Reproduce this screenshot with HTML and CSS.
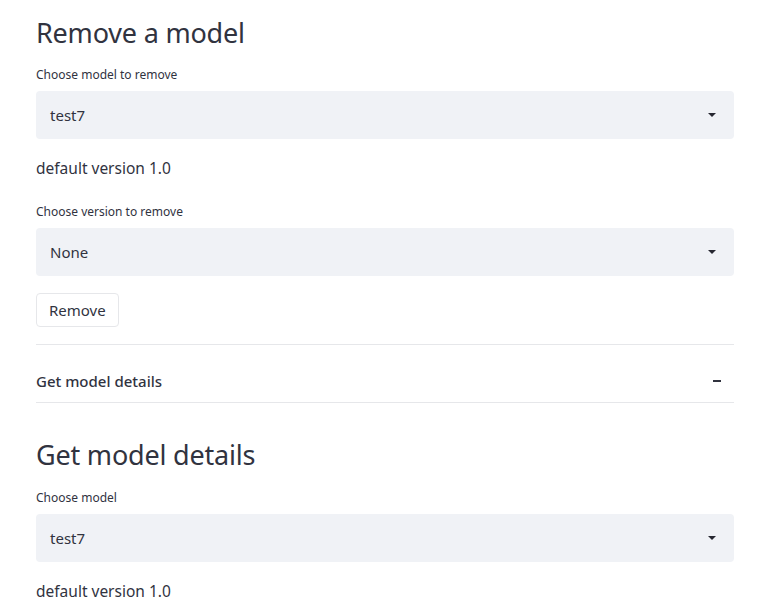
FILE: index.html
```html
<!DOCTYPE html>
<html lang="en">
<head>
    <meta charset="UTF-8">
    <meta name="viewport" content="width=device-width, initial-scale=1.0">
    <title>Models</title>
    <link rel="stylesheet" href="styles.css">
</head>
<body>
    <main class='page'>
        <h1 class='title first'>Remove a model</h1>

        <div class='field'>
            <label class='label'>Choose model to remove</label>
            <div class='select'>
                <span>test7</span>
                <svg class='caret' width="10" height="6" viewBox="0 0 10 6"><path d="M1 1h8L5 5z" fill="#262730"/></svg>
            </div>
        </div>

        <p class='text'>default version 1.0</p>

        <div class='field'>
            <label class='label'>Choose version to remove</label>
            <div class='select'>
                <span>None</span>
                <svg class='caret' width="10" height="6" viewBox="0 0 10 6"><path d="M1 1h8L5 5z" fill="#262730"/></svg>
            </div>
        </div>

        <button class='btn'>Remove</button>

        <section class='expander'>
            <div class='expander-head'>
                <span>Get model details</span>
                <span class='minus'></span>
            </div>
        </section>

        <h1 class='title second'>Get model details</h1>

        <div class='field'>
            <label class='label'>Choose model</label>
            <div class='select'>
                <span>test7</span>
                <svg class='caret' width="10" height="6" viewBox="0 0 10 6"><path d="M1 1h8L5 5z" fill="#262730"/></svg>
            </div>
        </div>

        <p class='text'>default version 1.0</p>
    </main>
</body>
</html>
```

FILE: styles.css
```css
body{
    margin: 0;
    background: #fff;
    color: #31333f;
    font-family: 'Noto Sans', 'Open Sans', sans-serif;
}
.page{
    width: 698px;
    padding: 0 36px;
}
.title{
    margin: 0;
    font-size: 27px;
    line-height: 40px;
    font-weight: 400;
    letter-spacing: -0.2px;
}
.first{
    margin-top: 13px;
}
.second{
    margin-top: 32px;
}
.field{
    margin-top: 14px;
}
.second + .field{
    margin-top: 15px;
}
.label{
    display: block;
    font-size: 12px;
    line-height: 16px;
    margin-bottom: 8px;
}
.select{
    height: 48px;
    background: #f0f2f6;
    border-radius: 4px;
    display: flex;
    align-items: center;
    justify-content: space-between;
    padding: 0 17px 0 14px;
    font-size: 15px;
}
.caret{
    display: block;
}
.text{
    margin: 18px 0 0;
    font-size: 15.5px;
    line-height: 22px;
}
.text + .field{
    margin-top: 25px;
}
.btn{
    display: block;
    margin-top: 17px;
    height: 34px;
    padding: 0 12px;
    background: #fff;
    border: 1px solid #e6e7ea;
    border-radius: 4px;
    color: #31333f;
    font-family: inherit;
    font-size: 15px;
}
.expander{
    margin-top: 17px;
    border-top: 1px solid #e6e7ea;
    border-bottom: 1px solid #e6e7ea;
}
.expander-head{
    display: flex;
    align-items: center;
    justify-content: space-between;
    padding: 25px 13px 10px 0;
    font-size: 15px;
    line-height: 22px;
    font-weight: 500;
}
.minus{
    width: 8px;
    height: 2px;
    background: #31333f;
}
```
